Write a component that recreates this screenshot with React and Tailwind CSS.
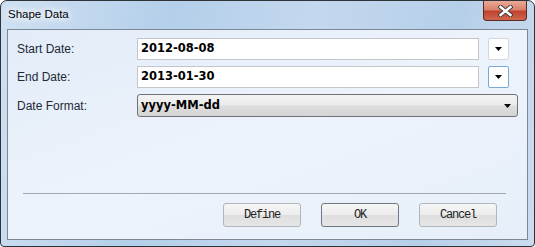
import React from 'react';

const Field = ({ label, value, focused }) => {
    return (
        <div className="flex items-center h-[22px]">
            <span className="w-[129px] pl-[9px] text-[12px] text-[#1f2a36] font-['Liberation_Sans',sans-serif]">{label}</span>
            <div className="w-[342px] h-[22px] bg-white border border-[#c3c6cc] flex items-center pl-[3px] text-[11.5px] font-bold text-black font-['DejaVu_Sans',sans-serif]">
                {value}
            </div>
            <div className={`ml-[9px] w-[21px] h-[22px] bg-white border rounded-[2px] flex items-center justify-center ${focused ? 'border-[#7aa8d8]' : 'border-[#d4d8dd]'}`}>
                <svg width="7" height="4" viewBox="0 0 7 4"><path d="M0 0h7L3.5 4z" fill="#000" /></svg>
            </div>
        </div>
    );
};

const Button = ({ children, isDefault }) => {
    return (
        <div className={`w-[78px] h-[24px] rounded-[3px] border flex items-center justify-center text-[12px] tracking-[-1.2px] text-[#222] font-['Liberation_Mono',monospace] bg-[linear-gradient(#f6f6f6_0%,#ececec_48%,#dedede_52%,#e6e6e6_100%)] ${isDefault ? 'border-[#6f7780]' : 'border-[#b2b5ba]'}`}>
            {children}
        </div>
    );
};

export default function App() {
    return (
        <div className="w-[535px] h-[247px] relative border border-[#2f3338] rounded-t-[7px] rounded-b-[4px] overflow-hidden bg-[linear-gradient(100deg,#cfe0f2_0%,#b4cfea_30%,#c3d8ee_55%,#b6cfe9_80%,#cbdcef_100%)] flex flex-col">
            <div className="h-[28px] flex items-center pl-[7px] relative">
                <span className="text-[11.5px] text-black font-['Liberation_Sans',sans-serif] [text-shadow:0_0_6px_#fff,0_0_8px_#fff,0_0_10px_#fff]">Shape Data</span>
                <div className="absolute right-[7px] top-0 w-[44px] h-[20px] rounded-b-[4px] border border-t-0 border-[#5b2a24] bg-[linear-gradient(#e9a997_0%,#d9826c_45%,#c0442e_55%,#d0674f_100%)] flex items-center justify-center">
                    <svg width="15" height="12" viewBox="0 0 15 12">
                        <path d="M2.5 2L12.5 10M12.5 2L2.5 10" stroke="#3a3a3a" strokeWidth="4.2" strokeLinecap="square" />
                        <path d="M2.5 2L12.5 10M12.5 2L2.5 10" stroke="#fff" strokeWidth="2.4" strokeLinecap="square" />
                    </svg>
                </div>
            </div>
            <div className="mx-[6px] h-[211px] border border-[#7b8896] bg-[linear-gradient(160deg,#e2ecf8_0%,#edf3fb_50%,#e6eff9_100%)] flex flex-col pt-[8px]">
                <div className="flex flex-col gap-[6px]">
                    <Field label="Start Date:" value="2012-08-08" />
                    <Field label="End Date:" value="2013-01-30" focused />
                    <div className="flex items-center h-[23px]">
                        <span className="w-[129px] pl-[9px] text-[12px] text-[#1f2a36] font-['Liberation_Sans',sans-serif]">Date Format:</span>
                        <div className="w-[381px] h-[23px] rounded-[3px] border border-[#6f7378] bg-[linear-gradient(#f3f3f3_0%,#ebebeb_48%,#dddddd_52%,#d5d5d5_100%)] flex items-center justify-between pl-[3px] pr-[6px] text-[11.5px] font-bold text-black font-['DejaVu_Sans',sans-serif]">
                            <span>yyyy-MM-dd</span>
                            <svg width="7" height="4" viewBox="0 0 7 4"><path d="M0 0h7L3.5 4z" fill="#000" /></svg>
                        </div>
                    </div>
                </div>
                <div className="mt-[76px] ml-[15px] w-[483px] h-[1px] bg-[#a3a8ae]"></div>
                <div className="mt-[9px] flex justify-end gap-[20px] pr-[30px]">
                    <Button>Define</Button>
                    <Button isDefault>OK</Button>
                    <Button>Cancel</Button>
                </div>
            </div>
        </div>
    );
}
